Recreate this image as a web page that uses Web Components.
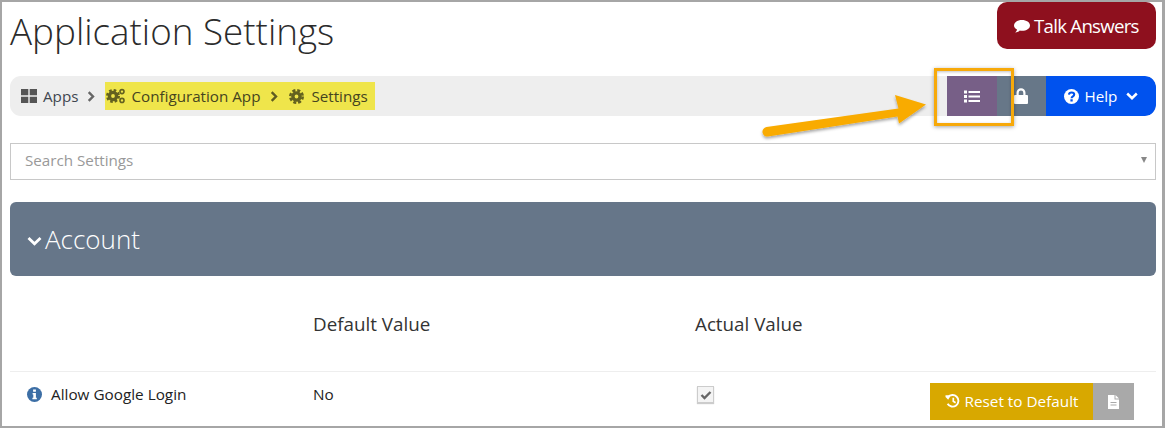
<!DOCTYPE html>
<html lang="en"><head><meta charset="utf-8"><title>Application Settings</title>
<style>
html,body{margin:0;padding:0;background:#fff}
body{font-family:"Open Sans","Liberation Sans",sans-serif;color:#222}
</style></head><body>
<app-frame>
  <page-header slot="top" title-text="Application Settings"></page-header>
  <crumb-bar></crumb-bar>
  <search-box placeholder="Search Settings"></search-box>
  <section-panel label="Account"></section-panel>
  <settings-table></settings-table>
</app-frame>
<script>
const ICONS={
 grid:'<svg width="16" height="14" viewBox="0 0 16 14"><path fill="currentColor" d="M0 0h7.300v6.300H0zM8.700 0H16v6.300H8.700zM0 7.700h7.300V14H0zM8.700 7.700H16V14H8.700z"/></svg>',
 chev:'<svg width="8" height="11" viewBox="0 0 8 11"><path fill="none" stroke="currentColor" stroke-width="2.400" d="M1.700 1.200 6 5.500 1.700 9.800"/></svg>',
 cogs:'<svg width="20" height="16" viewBox="0 0 20 16"><g fill="none" stroke="currentColor"><circle cx="7" cy="8" r="3.600" stroke-width="3.400"/><circle cx="7" cy="8" r="5.800" stroke-width="2.400" stroke-dasharray="2.600 1.950"/><circle cx="16" cy="3.600" r="2" stroke-width="1.600"/><circle cx="16" cy="12.400" r="2" stroke-width="1.600"/></g></svg>',
 cog:'<svg width="15" height="15" viewBox="0 0 15 15"><g fill="none" stroke="currentColor"><circle cx="7.500" cy="7.500" r="3.600" stroke-width="3.400"/><circle cx="7.500" cy="7.500" r="6.200" stroke-width="2.600" stroke-dasharray="3 1.870"/></g></svg>',
 list:'<svg width="16" height="13" viewBox="0 0 16 13"><path fill="currentColor" d="M0 .5h3v3H0zM0 5h3v3H0zM0 9.500h3v3H0zM4.500 1h11.500v2H4.500zM4.500 5.500h11.500v2H4.500zM4.500 10h11.500v2H4.500z"/></svg>',
 lock:'<svg width="14" height="16" viewBox="0 0 14 16"><path fill="currentColor" d="M1 7h1.500V4.800a4.500 4.500 0 0 1 9 0V7H13a1 1 0 0 1 1 1v7a1 1 0 0 1-1 1H1a1 1 0 0 1-1-1V8a1 1 0 0 1 1-1zM4.700 7h4.600V4.800a2.300 2.300 0 0 0-4.600 0z"/></svg>',
 help:'<svg width="15" height="15" viewBox="0 0 15 15"><circle cx="7.500" cy="7.500" r="7.500" fill="currentColor"/><path fill="none" stroke="var(--ib,#0052ee)" stroke-width="2.100" d="M4.900 5.700c.2-1.500 1.300-2.200 2.700-2.200 1.500 0 2.600.9 2.600 2.100 0 1.900-2.600 1.700-2.600 3.700"/><path fill="var(--ib,#0052ee)" d="M6.400 10.300h2.300v2.100H6.400z"/></svg>',
 down:'<svg width="12" height="8" viewBox="0 0 12 8"><path fill="none" stroke="currentColor" stroke-width="2.500" d="M1.200 1.500 6 6.200l4.800-4.700"/></svg>',
 downl:'<svg width="15" height="10" viewBox="0 0 15 10"><path fill="none" stroke="currentColor" stroke-width="2.800" d="M1.500 2 7.500 7.800 13.500 2"/></svg>',
 chat:'<svg width="16" height="14" viewBox="0 0 16 14"><path fill="currentColor" d="M8 1c4.400 0 8 2.300 8 5.400s-3.600 5.400-8 5.400c-.8 0-1.500-.1-2.200-.2C4.700 12.700 3 13.500 1 13.600c1-.9 1.800-2 2-3.200C1.200 9.400 0 8 0 6.400 0 3.300 3.600 1 8 1z"/></svg>',
 info:'<svg width="15" height="15" viewBox="0 0 15 15"><circle cx="7.500" cy="7.500" r="7.500" fill="#3c6ea5"/><path fill="#fff" d="M6.100 2.600h2.800v2.200H6.100zM5.600 6h3.300v4.700h.9v1.500H5.400v-1.500h.9V7.500h-.7z"/></svg>',
 history:'<svg width="15" height="14" viewBox="0 0 15 14"><path fill="none" stroke="currentColor" stroke-width="1.900" d="M3 3.300A5.800 5.800 0 1 1 2.600 9.800"/><path fill="currentColor" d="M.5 1.200h4.900v.6L3.200 5.800.5 3z"/><path fill="none" stroke="currentColor" stroke-width="1.700" d="M8.300 3.800v3.500l2.300 1.500"/></svg>',
 file:'<svg width="11" height="14" viewBox="0 0 11 14"><path fill="currentColor" fill-rule="evenodd" d="M0 0h6.500v4.500H11V14H0zM2.500 7v1h6V7zM2.500 9.500v1h6v-1zM7.500 0 11 3.500H7.500z"/></svg>'
};
function def(name,css,html){
  customElements.define(name,class extends HTMLElement{
    connectedCallback(){
      if(this.shadowRoot)return;
      const r=this.attachShadow({mode:'open'});
      r.innerHTML='<style>'+css+'</style>'+(typeof html==='function'?html(this):html);
    }
  });
}
def('x-icon',':host{display:inline-flex;align-items:center;justify-content:center;line-height:0}',e=>ICONS[e.getAttribute('name')]);

def('app-frame',`
:host{display:block;width:1165px;height:428px;box-sizing:border-box;border:2px solid #a6a6a6;border-right-width:3px;padding:0 6px 0 8px;overflow:hidden;position:relative;background:#fff}
.arrow{position:absolute;left:0;top:0;pointer-events:none;overflow:visible}
.mark{position:absolute;left:932px;top:66px;width:80px;height:58px;box-sizing:border-box;border:3px solid #f7a90a;box-shadow:0 1px 4px rgba(0,0,0,.35),inset 0 1px 3px rgba(0,0,0,.25);pointer-events:none}
`,`<slot name="top"></slot><slot></slot>
<div class="mark"></div>
<svg class="arrow" width="1160" height="140" viewBox="0 0 1160 140">
<defs><filter id="s" x="-10%" y="-30%" width="120%" height="170%"><feDropShadow dx="0" dy="2" stdDeviation="1.800" flood-color="#000" flood-opacity=".35"/></filter></defs>
<path filter="url(#s)" fill="#f9ab06" d="M764.500 125 896.500 106.500 893 93 924 102.500 897 121.500 895.500 114.500 766 134.500a4.800 4.800 0 0 1-1.500-9.500z"/>
</svg>`);

def('page-header',`
:host{display:flex;justify-content:space-between;align-items:flex-start;height:74px}
h1{margin:4px 0 0;font:300 36.800px/50px "Open Sans","Liberation Sans",sans-serif;color:#2b2b2b}
.talk{display:flex;align-items:center;gap:4px;box-sizing:border-box;width:159px;height:47px;padding:1px 0 0 17px;background:#8e101e;color:#fff;border-radius:10px;font:400 18.700px/1 "Open Sans","Liberation Sans",sans-serif;letter-spacing:-.75px}
`,e=>`<h1>${e.getAttribute('title-text')}</h1><div class="talk"><x-icon name="chat"></x-icon><span>Talk Answers</span></div>`);

def('crumb-bar',`
:host{display:flex;align-items:center;height:40px;background:#eee;border-radius:11px;font:400 15.200px/1 "Open Sans","Liberation Sans",sans-serif;color:#444;overflow:hidden}
.apps{display:flex;align-items:center;padding-left:11px;height:100%;gap:6px;color:#555}
.apps span{color:#3f4650;padding-top:2px}
.sep{margin:0 10px 0 9px;color:#666;display:inline-flex}
.hl{display:flex;align-items:center;height:28px;background:#efe54b;color:#4c4b22;padding:0 7px 0 1px}
.hl .i{color:#63611f}
.hl .t{color:#45441f;padding-top:2px}
.hl .sep{color:#5f5d22;margin:0 11px 0 10px}
.btns{margin-left:auto;display:flex;height:100%}
.b{display:flex;align-items:center;justify-content:center;color:#fff;--ib:#0052ee}
.p{width:50px;background:#775f87}
.l{width:49px;background:#677788}
.l x-icon{margin-right:1px}
.h{width:110px;background:#0052ee;gap:6px;border-radius:0 11px 11px 0;box-sizing:border-box}
.h span{padding-top:2px}
.h x-icon:last-child{margin-left:3px}
`,`<div class="apps"><x-icon name="grid"></x-icon><span>Apps</span></div>
<span class="sep"><x-icon name="chev"></x-icon></span>
<div class="hl"><x-icon class="i" name="cogs" style="margin-right:5px"></x-icon><span class="t">Configuration App</span><span class="sep"><x-icon name="chev"></x-icon></span><x-icon class="i" name="cog" style="margin-right:7px"></x-icon><span class="t">Settings</span></div>
<div class="btns"><div class="b p"><x-icon name="list"></x-icon></div><div class="b l"><x-icon name="lock"></x-icon></div><div class="b h"><x-icon name="help"></x-icon><span>Help</span><x-icon name="down"></x-icon></div></div>`);

def('search-box',`
:host{display:flex;align-items:center;justify-content:space-between;box-sizing:border-box;height:37px;margin-top:27px;border:1px solid #c8c8c8;padding:0 8px 2px 14px;font:400 15.200px/1 "Open Sans","Liberation Sans",sans-serif;color:#999}
i{width:0;height:0;border:3.500px solid transparent;border-top:6px solid #888;border-bottom:0;margin-top:-2px}
`,e=>`<span>${e.getAttribute('placeholder')}</span><i></i>`);

def('section-panel',`
:host{display:flex;align-items:center;box-sizing:border-box;height:74px;margin-top:22px;background:#667689;border-radius:6px;color:#fff;padding:0 0 0 17px;font:300 26px/1 "Open Sans","Liberation Sans",sans-serif}
x-icon{margin:4px 3px 0 0;width:15px}
`,e=>`<x-icon name="downl"></x-icon><span>${e.getAttribute('label')}</span>`);

def('settings-table',`
:host{display:block;font-family:"Open Sans","Liberation Sans",sans-serif}
.head,.row{display:grid;grid-template-columns:303px 382px 1fr}
.head{height:96px;box-sizing:border-box;padding-top:36px;font-size:18.800px;line-height:24px;color:#333;border-bottom:1px solid #eee}
.row{font-size:15.300px;color:#222;padding-top:10px;height:56px;box-sizing:border-box}
.name{display:flex;align-items:center;gap:9px;padding-left:17px;height:24px}
.val{height:24px;display:flex;align-items:center}
.cb{box-sizing:border-box;width:17px;height:17px;margin:4px 0 0 2px;border:1px solid #ccc;background:#f4f4f4;box-shadow:0 1px 1px rgba(0,0,0,.2);color:#666;display:flex;align-items:center;justify-content:center}
.cb svg{display:block}
.wrap{display:flex;height:37px;margin-left:auto;margin-right:22px;margin-top:1px}
.r{display:flex;align-items:center;justify-content:center;gap:5px;width:163px;background:#d8a800;color:#fff;padding-bottom:2px;box-sizing:border-box}
.f{display:flex;align-items:center;justify-content:center;width:41px;background:#a9a9a9;color:#fff}
.cell{display:flex;justify-content:space-between}
`,`<div class="head"><span></span><span>Default Value</span><span>Actual Value</span></div>
<div class="row"><div class="name"><x-icon name="info"></x-icon><span>Allow Google Login</span></div><div class="val">No</div>
<div class="cell"><div class="cb"><svg width="12" height="10" viewBox="0 0 12 10"><path fill="none" stroke="currentColor" stroke-width="2.400" d="M1.500 5 4.500 8 10.500 2"/></svg></div>
<div class="wrap"><div class="r"><x-icon name="history"></x-icon><span>Reset to Default</span></div><div class="f"><x-icon name="file"></x-icon></div></div></div></div>`);
</script>
</body></html>
